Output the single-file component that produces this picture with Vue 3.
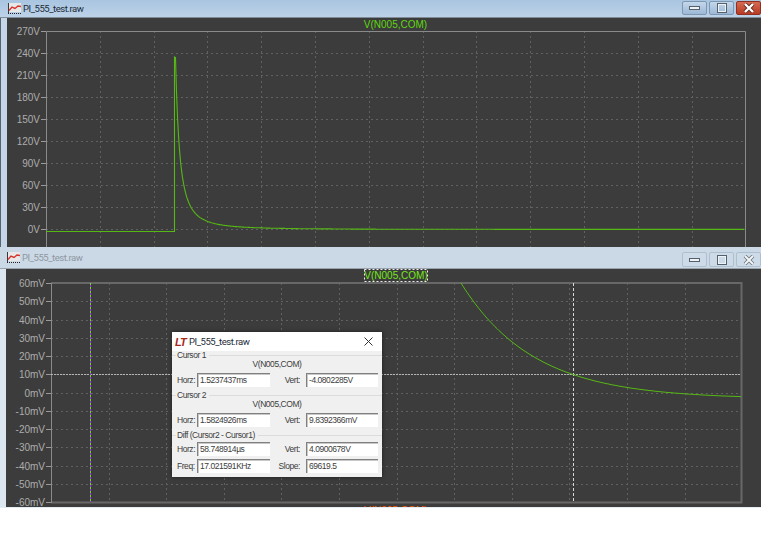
<template>
  <div class="desktop">
    <section class="win win-back">
      <header class="titlebar">
        <svg class="app-icon" width="13" height="12" viewBox="0 0 13 12">
          <rect x="1" y="0" width="12" height="9" fill="#e8e8e8" />
          <rect x="0" y="0" width="1" height="11" fill="#3a3a3a" />
          <path d="M0 10.5 H13" stroke="#222" stroke-dasharray="1 1" />
          <path d="M1 7.5 L4 4 L7 5.5 L10 3 L13 3.5" fill="none" stroke="#d8342c" stroke-width="1.4" />
        </svg>
        <span class="win-title">PI_555_test.raw</span>
        <div class="caption">
          <button class="cap"><span class="glyph-min"></span></button>
          <button class="cap"><span class="glyph-max"></span></button>
          <button class="cap cap-close">
            <svg width="12" height="10" viewBox="0 0 12 10">
              <path d="M2 1 L10 9 M10 1 L2 9" stroke="#5a2a20" stroke-width="4" />
              <path d="M2 1 L10 9 M10 1 L2 9" stroke="#fff" stroke-width="2.4" />
            </svg>
          </button>
        </div>
      </header>
      <svg class="plot" width="754" height="229" viewBox="7 18 754 229">
        <text x="395.5" y="28" class="trace-name" text-anchor="middle" fill="#5ed80e">V(N005,COM)</text>
        <g v-for="y in topRows" :key="y.label">
          <text x="40" :y="y.y + 4" class="axis" text-anchor="end">{{ y.label }}</text>
          <line x1="41" x2="46" :y1="y.y + 0.5" :y2="y.y + 0.5" stroke="#9a9a9a" />
          <line x1="46" x2="745" :y1="y.y + 0.5" :y2="y.y + 0.5" class="grid" />
        </g>
        <line v-for="x in topCols" :key="x" :x1="x + 0.5" :x2="x + 0.5" y1="31" y2="247" class="grid" />
        <path d="M46.5 247 V31.5 H745.5 V247" fill="none" stroke="#8a8a8a" />
        <path :d="topTrace" fill="none" stroke="#55b814" stroke-width="1.1" />
      </svg>
    </section>

    <section class="win win-front">
      <header class="titlebar titlebar-off">
        <svg class="app-icon" width="13" height="12" viewBox="0 0 13 12">
          <rect x="1" y="0" width="12" height="9" fill="#e8e8e8" />
          <rect x="0" y="0" width="1" height="11" fill="#3a3a3a" />
          <path d="M0 10.5 H13" stroke="#222" stroke-dasharray="1 1" />
          <path d="M1 7.5 L4 4 L7 5.5 L10 3 L13 3.5" fill="none" stroke="#d8342c" stroke-width="1.4" />
        </svg>
        <span class="win-title">PI_555_test.raw</span>
        <div class="caption">
          <button class="cap"><span class="glyph-min"></span></button>
          <button class="cap"><span class="glyph-max"></span></button>
          <button class="cap">
            <svg width="12" height="10" viewBox="0 0 12 10">
              <path d="M2 1 L10 9 M10 1 L2 9" stroke="#6a737c" stroke-width="3.6" />
              <path d="M2 1 L10 9 M10 1 L2 9" stroke="#f4f6f8" stroke-width="2" />
            </svg>
          </button>
        </div>
      </header>
      <svg class="plot" width="755" height="238" viewBox="6 269 755 238">
        <text x="396" y="279" class="trace-name" text-anchor="middle" fill="#74e816">V(N005,COM)</text>
        <rect x="364.5" y="269.5" width="63" height="12" fill="none" stroke="#eee" stroke-dasharray="2 2" />
        <g v-for="y in frontRows" :key="y.label">
          <text x="45" :y="y.y + 4" class="axis" text-anchor="end">{{ y.label }}</text>
          <line x1="46" x2="51" :y1="y.y + 0.5" :y2="y.y + 0.5" stroke="#9a9a9a" />
          <line x1="51" x2="741" :y1="y.y + 0.5" :y2="y.y + 0.5" class="grid" />
        </g>
        <line v-for="x in frontCols" :key="x" :x1="x + 0.5" :x2="x + 0.5" y1="283" y2="502" class="grid" />
        <path d="M51 283 H741.5 V502.5 H51" fill="none" stroke="#686868" stroke-width="2" />
        <line x1="51.5" x2="51.5" y1="283" y2="503" stroke="#8a8a8a" />
        <line x1="51" x2="741" y1="374.5" y2="374.5" class="cursor-h" />
        <line x1="573.5" x2="573.5" y1="283" y2="502" class="cursor-v" />
        <line x1="90.5" x2="90.5" y1="283" y2="502" stroke="#6fdc20" stroke-dasharray="2 2" />
        <line x1="90.5" x2="90.5" y1="285" y2="502" stroke="#9b30ff" stroke-dasharray="2 2" />
        <path :d="frontTrace" fill="none" stroke="#55b814" />
      </svg>
      <div class="clipped-name">V(N005,COM)</div>
    </section>

    <aside class="dialog">
      <header class="dlg-head">
        <span class="lt-logo">LT</span>
        <span class="dlg-title">PI_555_test.raw</span>
        <svg class="dlg-close" width="9" height="9" viewBox="0 0 9 9">
          <path d="M0.5 0.5 L8.5 8.5 M8.5 0.5 L0.5 8.5" stroke="#333" />
        </svg>
      </header>
      <div class="group-label first"><span>Cursor 1</span></div>
      <div class="trace-line">V(N005,COM)</div>
      <div class="row">
        <label>Horz:</label><span class="field">1.5237437ms</span>
        <label class="wide">Vert:</label><span class="field">-4.0802285V</span>
      </div>
      <div class="group-label"><span>Cursor 2</span></div>
      <div class="trace-line">V(N005,COM)</div>
      <div class="row">
        <label>Horz:</label><span class="field">1.5824926ms</span>
        <label class="wide">Vert:</label><span class="field">9.8392366mV</span>
      </div>
      <div class="group-label"><span>Diff (Cursor2 - Cursor1)</span></div>
      <div class="row row-3">
        <label>Horz:</label><span class="field">58.748914µs</span>
        <label class="wide">Vert:</label><span class="field">4.0900678V</span>
      </div>
      <div class="row row-4">
        <label>Freq:</label><span class="field">17.021591KHz</span>
        <label class="wide">Slope:</label><span class="field">69619.5</span>
      </div>
    </aside>
  </div>
</template>

<script setup>
const topRows = [270, 240, 210, 180, 150, 120, 90, 60, 30, 0].map((v, i) => ({
  label: v + 'V',
  y: 31 + i * 22,
}))
const topCols = Array.from({ length: 12 }, (_, i) => Math.round(46 + 53.8 * (i + 1)))

const frontRows = [60, 50, 40, 30, 20, 10, 0, -10, -20, -30, -40, -50, -60].map((v, i) => ({
  label: v + 'mV',
  y: Math.round(283 + i * 18.25),
}))
const frontCols = Array.from({ length: 11 }, (_, i) => Math.round(108.5 + 57.6 * i))

// spike on the overview, decays towards 0V
function buildTopTrace() {
  let d = 'M46 231.5 H174.5 V57'
  for (let x = 175.5; x <= 745; x += 1) {
    const t = x - 175.5
    const y = 229.5 - 172 / (1 + t / 8) ** 1.9
    d += ` L${x} ${y.toFixed(1)}`
  }
  return d
}

// zoomed in tail between the cursors
function buildFrontTrace() {
  let d = ''
  for (let x = 461; x <= 741; x += 2) {
    const y = 399 - 116 * Math.exp(-(x - 461) / 72)
    d += `${d ? ' L' : 'M'}${x} ${y.toFixed(1)}`
  }
  return d
}

const topTrace = buildTopTrace()
const frontTrace = buildFrontTrace()
</script>

<style>
html,
body {
  margin: 0;
  background: #fff;
}
</style>

<style scoped>
.desktop {
  position: relative;
  width: 765px;
  height: 536px;
  overflow: hidden;
  background: #fff;
  font-family: 'Liberation Sans', Arial, sans-serif;
}

.win {
  position: absolute;
  left: 0;
  width: 761px;
  display: flex;
  flex-direction: column;
  box-sizing: border-box;
  overflow: hidden;
}
.win-back {
  top: 0;
  height: 247px;
  padding-left: 7px;
  background: linear-gradient(90deg, #59636d 0, #59636d 1px, #c4d6e8 1px, #b4cbe2 100%);
}
.win-back .titlebar {
  margin-left: -7px;
}
.win-front {
  top: 247px;
  height: 261px;
  padding-left: 6px;
  background: #dbe6f0;
  border-bottom: 1px solid #e3ebf3;
}
.win-front .titlebar {
  margin-left: -6px;
}

.titlebar {
  flex: none;
  display: flex;
  align-items: center;
  height: 18px;
  padding-left: 8px;
  background: linear-gradient(#a9c5e0, #bcd2e8);
  border-bottom: 1px solid #7f8b97;
  box-sizing: border-box;
}
.titlebar-off {
  height: 22px;
  padding-left: 7px;
  background: #cbd9e6;
  border-bottom-color: #99a3ac;
}
.app-icon {
  flex: none;
  margin-right: 2px;
}
.win-title,
.dlg-title {
  font-family: Roboto, 'Liberation Sans', sans-serif;
  font-size: 9.5px;
  letter-spacing: -0.45px;
  color: #1c2a38;
}
.titlebar-off .win-title {
  color: #8d97a1;
}
.caption {
  display: flex;
  gap: 2px;
  margin-left: auto;
  align-self: flex-start;
  padding-top: 1px;
}
.titlebar-off .caption {
  padding-top: 5px;
}
.cap {
  display: flex;
  align-items: center;
  justify-content: center;
  width: 25px;
  height: 14px;
  padding: 0;
  background: linear-gradient(#c4d7ea, #9db9d6);
  border: 1px solid #7d97b3;
  border-radius: 2px;
  box-sizing: border-box;
}
.titlebar-off .cap {
  height: 15px;
  background: #cddbe8;
  border-color: #b0bfce;
}
.cap-close {
  background: linear-gradient(#d66a52, #b93a23);
  border-color: #8f3020;
}
.glyph-min {
  width: 11px;
  height: 4px;
  background: #eef3f8;
  border: 1px solid #56606b;
  box-sizing: border-box;
}
.glyph-max {
  width: 10px;
  height: 10px;
  box-sizing: border-box;
  border: 2px solid #eef3f8;
  outline: 1px solid #56606b;
  outline-offset: -1px;
}

.plot {
  flex: none;
  display: block;
  background: #3c3c3c;
}
.axis {
  font-size: 10px;
  fill: #adadad;
  font-family: 'Liberation Sans', Arial, sans-serif;
}
.trace-name {
  font-size: 10px;
  font-family: 'Liberation Sans', Arial, sans-serif;
}
.grid {
  stroke: #616161;
  stroke-dasharray: 2 3;
}
.cursor-h {
  stroke: #b4b4b4;
  stroke-dasharray: 2 1;
}
.cursor-v {
  stroke: #d8d8d8;
  stroke-dasharray: 3 2;
}
.clipped-name {
  position: absolute;
  left: 364px;
  top: 258px;
  font-size: 10px;
  line-height: 12px;
  color: #ff5a00;
}

.dialog {
  position: absolute;
  left: 172px;
  top: 332px;
  width: 210px;
  height: 145px;
  background: #f0f0f0;
  box-shadow: 0 0 4px rgba(0, 0, 0, 0.5);
  font-family: 'Liberation Sans', Arial, sans-serif;
  font-size: 8.5px;
  letter-spacing: -0.45px;
  color: #3c3c3c;
}
.dlg-head {
  display: flex;
  align-items: center;
  height: 19px;
  padding: 0 9px 0 3px;
  background: #fff;
}
.lt-logo {
  width: 14px;
  font-size: 11px;
  font-weight: 700;
  font-style: italic;
  color: #a8281c;
  letter-spacing: -1px;
}
.dlg-close {
  margin-left: auto;
}
.group-label {
  display: flex;
  align-items: center;
  height: 9px;
  margin-top: 4px;
  line-height: 9px;
}
.group-label.first {
  margin-top: 0;
}
.group-label::before {
  content: '';
  width: 4px;
  height: 1px;
  background: #dcdcdc;
}
.group-label::after {
  content: '';
  flex: 1;
  height: 1px;
  margin-left: 3px;
  background: #dcdcdc;
}
.group-label span {
  padding-left: 1px;
}
.trace-line {
  height: 9px;
  line-height: 9px;
  text-align: center;
}
.row {
  display: flex;
  align-items: center;
  height: 14px;
  margin-top: 4px;
  padding-left: 5px;
}
.row-3 {
  margin-top: 2px;
}
.row-4 {
  margin-top: 3px;
}
.row label {
  flex: none;
  width: 20px;
}
.row label.wide {
  width: 36px;
  padding-right: 6px;
  text-align: right;
  box-sizing: border-box;
}
.field {
  flex: none;
  width: 73px;
  height: 14px;
  padding-left: 2px;
  box-sizing: border-box;
  background: #fff;
  border-top: 1px solid #808080;
  border-left: 1px solid #808080;
  box-shadow: inset 1px 1px 0 #c8c8c8;
  line-height: 12px;
  overflow: hidden;
  white-space: nowrap;
}
.row .field:last-child {
  width: 72px;
}
</style>
